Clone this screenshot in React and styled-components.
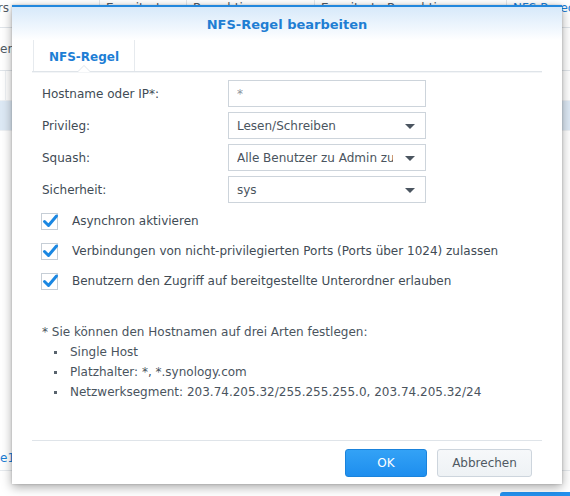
import styled, { createGlobalStyle } from 'styled-components';

const GlobalStyle = createGlobalStyle`
  html, body {
    margin: 0;
    padding: 0;
  }
  body {
    width: 570px;
    height: 496px;
    overflow: hidden;
    background: #ffffff;
    font-family: "DejaVu Sans", Verdana, sans-serif;
    font-size: 12px;
    color: #414b55;
  }
`

// ---- page behind the dialog ----
const Page = styled.div`
  position: relative;
  width: 570px;
  height: 496px;
  display: flex;
  flex-direction: column;
  overflow: hidden;
`
const HeaderRow = styled.div`
  display: flex;
  height: 27px;
  border-bottom: 1px solid #e0e5ea;
  flex-shrink: 0;
`
const HeaderCell = styled.div`
  width: ${p => p.$w}px;
  flex-shrink: 0;
  padding: 1px 6px 0;
  box-sizing: border-box;
  border-right: 1px solid #e3e7eb;
  white-space: nowrap;
  overflow: hidden;
  line-height: 14px;
  color: ${p => (p.$active ? '#1a7dd4' : '#505a64')};
  text-indent: ${p => p.$indent || 0}px;
`
const ToolRow = styled.div`
  height: 42px;
  display: flex;
  align-items: center;
  border-bottom: 1px solid #e0e5ea;
  flex-shrink: 0;
  color: #505a64;
  white-space: nowrap;
`
const GridRow = styled.div`
  height: 29px;
  display: flex;
  flex-shrink: 0;
  border-bottom: 1px solid #eef1f4;
  background: ${p => (p.$selected ? '#dde9f5' : '#ffffff')};
`
const GridCell = styled.div`
  width: ${p => p.$w}px;
  flex-shrink: 0;
  border-right: 1px solid #eef1f4;
`
const Filler = styled.div`
  flex: 1;
`
const PagerRow = styled.div`
  height: 24px;
  display: flex;
  align-items: center;
  border-bottom: 1px solid #e6eaee;
  color: #1a7dd4;
  flex-shrink: 0;
`
const BottomBar = styled.div`
  height: 25px;
  display: flex;
  justify-content: flex-end;
  align-items: flex-end;
  flex-shrink: 0;
`
const PageButton = styled.div`
  width: 70px;
  height: 4px;
  background: #2391ee;
  border-radius: 3px 0 0 0;
`

// ---- dialog ----
const Dialog = styled.div`
  position: absolute;
  left: 12px;
  top: 5px;
  width: 550px;
  height: 479px;
  box-sizing: border-box;
  background: #ffffff;
  border-top: 2px solid #2287dd;
  box-shadow: 0 3px 10px rgba(0, 0, 0, 0.35), 0 0 2px rgba(0, 0, 0, 0.2);
  display: flex;
  flex-direction: column;
`
const TitleBar = styled.div`
  height: 33px;
  flex-shrink: 0;
  display: flex;
  align-items: center;
  justify-content: center;
  background: linear-gradient(to bottom, #d7e9fa 0%, #f4f9fe 75%, #ffffff 100%);
`
const Title = styled.div`
  font-size: 13px;
  font-weight: bold;
  color: #1f7ed3;
  padding-top: 2px;
`
const Body = styled.div`
  flex: 1;
  padding: 0 20px;
  display: flex;
  flex-direction: column;
`
const TabBar = styled.div`
  height: 31px;
  display: flex;
  border-bottom: 1px solid #dfe4e9;
  box-shadow: 0 1px 0 #f3f5f7;
`
const Tab = styled.div`
  position: relative;
  width: 102px;
  margin-left: 1px;
  display: flex;
  align-items: center;
  justify-content: center;
  border-left: 1px solid #e6eaee;
  border-right: 1px solid #e6eaee;
  font-weight: bold;
  color: #1d7ed5;
  padding-top: 2px;
  box-sizing: border-box;

  &::before,
  &::after {
    content: '';
    position: absolute;
    left: 50%;
    bottom: -1px;
    width: 0;
    height: 0;
    border-style: solid;
  }
  &::before {
    margin-left: -7px;
    border-width: 0 7px 7px 7px;
    border-color: transparent transparent #dfe4e9 transparent;
  }
  &::after {
    margin-left: -6px;
    bottom: -1px;
    border-width: 0 6px 6px 6px;
    border-color: transparent transparent #ffffff transparent;
  }
`
const Form = styled.div`
  margin-top: 8px;
  display: flex;
  flex-direction: column;
  gap: 5px;
`
const FormRow = styled.div`
  display: grid;
  grid-template-columns: 186px 198px;
  align-items: center;
  padding-left: 10px;
`
const Label = styled.div`
  color: #414b55;
`
const Field = styled.div`
  position: relative;
  height: 27px;
  box-sizing: border-box;
  border: 1px solid #cdd4db;
  background: #ffffff;
  display: flex;
  align-items: center;
  padding: 0 ${p => (p.$select ? '32px' : '8px')} 0 8px;
  color: ${p => (p.$muted ? '#8a939c' : '#4a545e')};
  white-space: nowrap;
  overflow: hidden;
`
const FieldText = styled.span`
  overflow: hidden;
  display: block;
`
const Caret = styled.span`
  position: absolute;
  right: 10px;
  top: 11px;
  width: 0;
  height: 0;
  border-left: 5px solid transparent;
  border-right: 5px solid transparent;
  border-top: 5px solid #4b5560;
`
const Checks = styled.div`
  margin-top: 3px;
  display: flex;
  flex-direction: column;
`
const CheckRow = styled.div`
  height: 30px;
  display: flex;
  align-items: center;
  gap: 13px;
  padding-left: 9px;
  color: #414b55;
`
const Note = styled.div`
  margin-top: 26px;
  padding-left: 10px;
  line-height: 20px;
  color: #4a545e;
`
const Bullets = styled.ul`
  list-style: none;
  margin: 0;
  padding: 0 0 0 12px;
`
const Bullet = styled.li`
  display: flex;
  align-items: center;
  gap: 13px;

  &::before {
    content: '';
    width: 3px;
    height: 3px;
    background: #59636d;
  }
`
const Footer = styled.div`
  margin: 0 20px;
  border-top: 1px solid #dfe4e9;
  padding: 8px 10px 7px 0;
  display: flex;
  justify-content: flex-end;
  gap: 10px;
  flex-shrink: 0;
`
const Button = styled.button`
  width: ${p => p.$w}px;
  height: 28px;
  box-sizing: border-box;
  border-radius: 3px;
  font-family: "DejaVu Sans", Verdana, sans-serif;
  font-size: 12px;
  cursor: pointer;
  border: 1px solid ${p => (p.$primary ? '#1a83dc' : '#cdd5dd')};
  background: ${p =>
    p.$primary
      ? 'linear-gradient(to bottom, #33a2f6, #1e8eee)'
      : 'linear-gradient(to bottom, #f6f8fa, #eef2f5)'};
  color: ${p => (p.$primary ? '#ffffff' : '#4f5963')};
`

const CheckBox = () => (
  <svg width="18" height="18" viewBox="0 0 18 18">
    <rect x="0.5" y="1.5" width="16" height="16" fill="#fff" stroke="#c6ced6" />
    <path d="M3.5 9.5 L7.5 13.5 L15.5 4" fill="none" stroke="#1a87e2" strokeWidth="3" strokeLinecap="round" strokeLinejoin="round" />
  </svg>
)

const fields = [
  { label: 'Hostname oder IP*:', value: '*', muted: true },
  { label: 'Privileg:', value: 'Lesen/Schreiben', select: true },
  { label: 'Squash:', value: 'Alle Benutzer zu Admin zuordnen', select: true },
  { label: 'Sicherheit:', value: 'sys', select: true },
]

const options = [
  'Asynchron aktivieren',
  'Verbindungen von nicht-privilegierten Ports (Ports über 1024) zulassen',
  'Benutzern den Zugriff auf bereitgestellte Unterordner erlauben',
]

const App = () => {
  return (
    <Page>
      <GlobalStyle />
      <HeaderRow>
        <HeaderCell $w={100} $indent={-76}>Unterordners</HeaderCell>
        <HeaderCell $w={87}>Erweitert</HeaderCell>
        <HeaderCell $w={128}>Berechtigungen</HeaderCell>
        <HeaderCell $w={192}>Erweiterte Berechtigungen</HeaderCell>
        <HeaderCell $w={80} $active>NFS-Berechtigungen</HeaderCell>
      </HeaderRow>
      <ToolRow>erlauben</ToolRow>
      <GridRow>
        <GridCell $w={5} />
        <GridCell $w={500} />
      </GridRow>
      <GridRow $selected />
      <Filler />
      <PagerRow>e1</PagerRow>
      <BottomBar>
        <PageButton />
      </BottomBar>

      <Dialog>
        <TitleBar>
          <Title>NFS-Regel bearbeiten</Title>
        </TitleBar>
        <Body>
          <TabBar>
            <Tab>NFS-Regel</Tab>
          </TabBar>
          <Form>
            {fields.map(f => (
              <FormRow key={f.label}>
                <Label>{f.label}</Label>
                <Field $select={f.select} $muted={f.muted}>
                  <FieldText>{f.value}</FieldText>
                  {f.select && <Caret />}
                </Field>
              </FormRow>
            ))}
          </Form>
          <Checks>
            {options.map(o => (
              <CheckRow key={o}>
                <CheckBox />
                <span>{o}</span>
              </CheckRow>
            ))}
          </Checks>
          <Note>
            * Sie können den Hostnamen auf drei Arten festlegen:
            <Bullets>
              <Bullet>Single Host</Bullet>
              <Bullet>Platzhalter: *, *.synology.com</Bullet>
              <Bullet>Netzwerksegment: 203.74.205.32/255.255.255.0, 203.74.205.32/24</Bullet>
            </Bullets>
          </Note>
        </Body>
        <Footer>
          <Button $primary $w={82}>OK</Button>
          <Button $w={95}>Abbrechen</Button>
        </Footer>
      </Dialog>
    </Page>
  )
}

export default App;
